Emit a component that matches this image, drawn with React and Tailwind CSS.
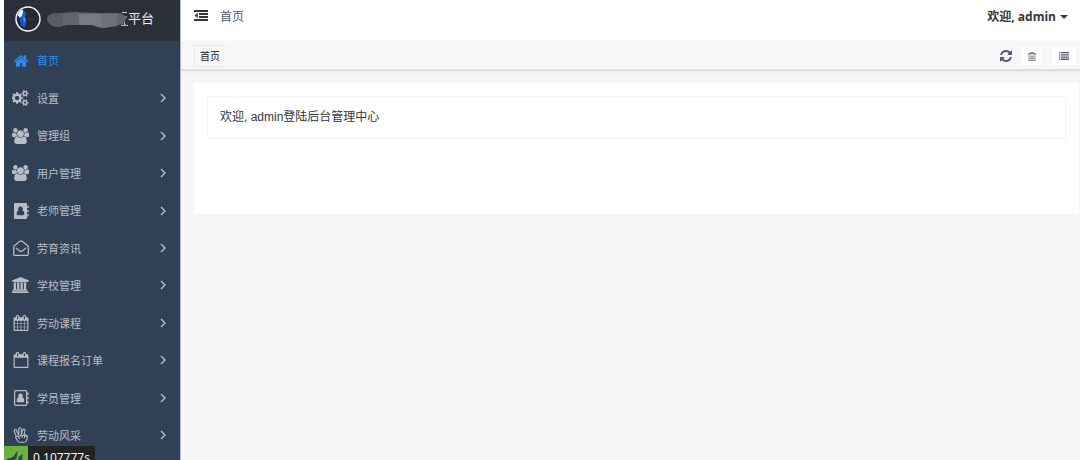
import React, { useState } from "react";

const HomeIcon = () => (
  <svg viewBox="0 0 1792 1792" className="h-4 w-4" fill="currentColor">
    <path d="M1472 992v480q0 26-19 45t-45 19h-384v-384h-256v384h-384q-26 0-45-19t-19-45v-480q0-1 .5-3t.5-3l575-474 575 474q1 2 1 6zm223-69l-62 74q-8 9-21 11h-3q-13 0-21-7l-692-577-692 577q-12 8-24 7-13-2-21-11l-62-74q-8-10-7-23.5t11-21.5l719-599q32-26 76-26t76 26l244 204v-195q0-14 9-23t23-9h192q14 0 23 9t9 23v408l219 182q10 8 11 21.5t-7 23.5z" />
  </svg>
);

const CogsIcon = () => (
  <svg viewBox="0 0 1920 1792" className="h-4 w-[17px]" fill="currentColor">
    <path d="M832 896q0-106-75-181t-181-75-181 75-75 181 75 181 181 75 181-75 75-181zm768 512q0-52-38-90t-90-38-90 38-38 90q0 53 37.5 90.5t90.5 37.5 90.5-37.5 37.5-90.5zm0-1024q0-52-38-90t-90-38-90 38-38 90q0 53 37.5 90.5t90.5 37.5 90.5-37.5 37.5-90.5zm-384 421v185q0 10-7 19.5t-16 10.5l-155 24q-11 35-32 76 34 48 90 115 7 11 7 20 0 12-7 19-23 30-82.5 89.5t-78.5 59.5q-11 0-21-7l-115-90q-37 19-77 31-11 108-23 155-7 24-30 24h-186q-11 0-20-7.5t-10-17.5l-23-153q-34-10-75-31l-118 89q-7 7-20 7-11 0-21-8-144-133-144-160 0-9 7-19 10-14 41-53t47-61q-23-44-35-82l-152-24q-10-1-17-9.5t-7-19.5v-185q0-10 7-19.5t16-10.5l155-24q11-35 32-76-34-48-90-115-7-11-7-20 0-12 7-20 22-30 82-89t79-59q11 0 21 7l115 90q34-18 77-32 11-108 23-154 7-24 30-24h186q11 0 20 7.5t10 17.5l23 153q34 10 75 31l118-89q8-7 20-7 11 0 21 8 144 133 144 160 0 8-7 19-12 16-42 54t-45 60q23 48 34 82l152 23q10 2 17 10.5t7 19.5zm640 533v140q0 16-149 31-12 27-30 52 51 113 51 138 0 4-4 7-122 71-124 71-8 0-46-47t-52-68q-20 2-30 2t-30-2q-14 21-52 68t-46 47q-2 0-124-71-4-3-4-7 0-25 51-138-18-25-30-52-149-15-149-31v-140q0-16 149-31 13-29 30-52-51-113-51-138 0-4 4-7 4-2 35-20t59-34 30-16q8 0 46 46.5t52 67.5q20-2 30-2t30 2q51-71 92-112l6-2q4 0 124 70 4 3 4 7 0 25-51 138 17 23 30 52 149 15 149 31zm0-1024v140q0 16-149 31-12 27-30 52 51 113 51 138 0 4-4 7-122 71-124 71-8 0-46-47t-52-68q-20 2-30 2t-30-2q-14 21-52 68t-46 47q-2 0-124-71-4-3-4-7 0-25 51-138-18-25-30-52-149-15-149-31v-140q0-16 149-31 13-29 30-52-51-113-51-138 0-4 4-7 4-2 35-20t59-34 30-16q8 0 46 46.5t52 67.5q20-2 30-2t30 2q51-71 92-112l6-2q4 0 124 70 4 3 4 7 0 25-51 138 17 23 30 52 149 15 149 31z" />
  </svg>
);

const UsersIcon = () => (
  <svg viewBox="64 0 1920 1792" className="h-4 w-[17px]" fill="currentColor">
    <path d="M657 896q-162 5-265 128h-134q-82 0-138-40.5t-56-118.5q0-353 124-353 6 0 43.5 21t97.5 42.5 119 21.5q67 0 133-23-5 37-5 66 0 159 93 294zm1071 637q0 120-73 189.5t-194 69.5h-874q-121 0-194-69.5t-73-189.5q0-53 3.5-103.5t14-109 26.5-108.5 43-97.5 62-81 85.5-53.5 111.5-20q10 0 43 21.5t73 48 107 48 135 21.5 135-21.5 107-48 73-48 43-21.5q61 0 111.5 20t85.5 53.5 62 81 43 97.5 26.5 108.5 14 109 3.5 103.5zm-1024-1277q0 106-75 181t-181 75-181-75-75-181 75-181 181-75 181 75 75 181zm704 384q0 159-112.5 271.5t-271.5 112.5-271.5-112.5-112.5-271.5 112.5-271.5 271.5-112.5 271.5 112.5 112.5 271.5zm576 225q0 78-56 118.5t-138 40.5h-134q-103-123-265-128 93-135 93-294 0-29-5-66 66 23 133 23 59 0 119-21.5t97.5-42.5 43.5-21q124 0 124 353zm-128-609q0 106-75 181t-181 75-181-75-75-181 75-181 181-75 181 75 75 181z" />
  </svg>
);

const BookIcon = () => (
  <svg viewBox="0 0 16 16" className="h-4 w-4" fill="currentColor">
    <path
      fillRule="evenodd"
      d="M2 0h11a1 1 0 0 1 1 1v14a1 1 0 0 1-1 1H2a1 1 0 0 1-1-1V1a1 1 0 0 1 1-1zM7.500 3.500A2.300 2.300 0 0 0 5.800 7.400C4.200 7.500 3.700 8.900 3.700 11c0 .8.400 1.200 1.100 1.200h5.400c.7 0 1.100-.4 1.100-1.200 0-2.100-.5-3.500-2.100-3.600A2.300 2.300 0 0 0 7.500 3.500z"
    />
    <path d="M14.300 2.500h1.300v2.500h-1.300zM14.300 6.700h1.300v2.500h-1.300zM14.300 10.900h1.300v2.500h-1.300z" />
  </svg>
);

const BookOutlineIcon = () => (
  <svg viewBox="0 0 16 16" className="h-4 w-4" fill="currentColor">
    <rect x="1.600" y="0.600" width="12" height="14.800" rx="1" fill="none" stroke="currentColor" strokeWidth="1.200" />
    <path d="M7.500 3.500A2.300 2.300 0 0 0 5.800 7.400C4.200 7.500 3.700 8.900 3.700 11c0 .8.400 1.200 1.100 1.200h5.400c.7 0 1.100-.4 1.100-1.200 0-2.100-.5-3.500-2.100-3.600A2.300 2.300 0 0 0 7.500 3.500z" />
    <path d="M14.300 2.500h1.300v2.500h-1.300zM14.300 6.700h1.300v2.500h-1.300zM14.300 10.900h1.300v2.500h-1.300z" />
  </svg>
);

const EnvelopeIcon = () => (
  <svg viewBox="0 0 16 16" className="h-4 w-4" fill="none" stroke="currentColor" strokeWidth="1.200" strokeLinejoin="round">
    <path d="M.7 6.200 6.800 1.300Q8 .3 9.200 1.300L15.300 6.200V14.300a1 1 0 0 1-1 1H1.700a1 1 0 0 1-1-1z" />
    <path d="M3.300 8.200 6.800 11Q8 12 9.200 11L12.700 8.200" strokeLinecap="round" />
  </svg>
);

const SchoolIcon = () => (
  <svg viewBox="64 0 1920 1792" className="h-4 w-[17px]" fill="currentColor">
    <path d="M1024 0l960 384v128h-128q0 26-20.500 45t-48.500 19h-1526q-28 0-48.500-19t-20.500-45h-128v-128zm-768 640h256v768h128v-768h256v768h128v-768h256v768h128v-768h256v768h59q28 0 48.500 19t20.500 45v64h-1664v-64q0-26 20.500-45t48.500-19h59v-768zm1595 960q28 0 48.500 19t20.500 45v128h-1920v-128q0-26 20.500-45t48.500-19h1782z" />
  </svg>
);

const CalendarIcon = () => (
  <svg viewBox="0 0 1792 1792" className="h-4 w-4" fill="currentColor">
    <path d="M192 1664h288v-288h-288v288zm352 0h320v-288h-320v288zm-352-352h288v-320h-288v320zm352 0h320v-320h-320v320zm-352-384h288v-288h-288v288zm736 736h320v-288h-320v288zm-384-736h320v-288h-320v288zm768 736h288v-288h-288v288zm-384-352h320v-320h-320v320zm-352-864v-288q0-13-9.500-22.500t-22.500-9.500h-64q-13 0-22.500 9.500t-9.500 22.500v288q0 13 9.500 22.500t22.500 9.500h64q13 0 22.500-9.500t9.500-22.500zm736 864h288v-320h-288v320zm-384-384h320v-288h-320v288zm384 0h288v-288h-288v288zm32-480v-288q0-13-9.500-22.500t-22.500-9.500h-64q-13 0-22.500 9.500t-9.500 22.500v288q0 13 9.500 22.500t22.500 9.500h64q13 0 22.500-9.500t9.500-22.500zm384-64v1280q0 52-38 90t-90 38h-1408q-52 0-90-38t-38-90v-1280q0-52 38-90t90-38h128v-96q0-66 47-113t113-47h64q66 0 113 47t47 113v96h384v-96q0-66 47-113t113-47h64q66 0 113 47t47 113v96h128q52 0 90 38t38 90z" />
  </svg>
);

const CalendarOutlineIcon = () => (
  <svg viewBox="0 0 1792 1792" className="h-4 w-4" fill="currentColor">
    <path d="M192 1664h1408v-1024h-1408v1024zm384-1216v-288q0-14-9-23t-23-9h-64q-14 0-23 9t-9 23v288q0 14 9 23t23 9h64q14 0 23-9t9-23zm768 0v-288q0-14-9-23t-23-9h-64q-14 0-23 9t-9 23v288q0 14 9 23t23 9h64q14 0 23-9t9-23zm384-64v1280q0 52-38 90t-90 38h-1408q-52 0-90-38t-38-90v-1280q0-52 38-90t90-38h128v-96q0-66 47-113t113-47h64q66 0 113 47t47 113v96h384v-96q0-66 47-113t113-47h64q66 0 113 47t47 113v96h128q52 0 90 38t38 90z" />
  </svg>
);

const PeaceIcon = () => (
  <svg viewBox="0 0 16 16" className="h-4 w-4" fill="none" stroke="currentColor" strokeWidth="1.100" strokeLinecap="round" strokeLinejoin="round">
    <path d="M3.300 9.500 1.200 4.300Q1 2.900 2.100 2.600 3.100 2.400 3.600 3.500L5.700 8.300V1.900Q5.900.7 7 .7T8.300 1.900V7.300L9.700 3Q10.300 1.900 11.300 2.200 12.300 2.700 12 3.900L10.900 7.800Q13.900 7.500 14.100 9V12Q13.500 15.300 10.500 15.300H6.700Q5.500 15.300 4.500 13.800L2.700 10.800Q2.500 9.800 3.300 9.500z" />
    <path d="M3.300 9.500Q4.600 8.900 5.400 10L6.500 11.600M6.700 9.300Q8.300 7.200 9 8.700L9.100 10.600M9.200 8.500Q11 7.300 11.600 8.900V10.600M11.600 9.200Q13 8 14 9.500" />
  </svg>
);

const ArrowIcon = () => (
  <svg viewBox="0 0 6 10" className="h-2.5 w-1.5" fill="none" stroke="currentColor" strokeWidth="1.400">
    <path d="M1 1l4 4-4 4" />
  </svg>
);

const OutdentIcon = () => (
  <svg viewBox="0 0 14 11" className="h-[11px] w-3.5" fill="currentColor">
    <path d="M0 0h14v2H0zM5 3h9v2H5zM5 6h9v2H5zM0 9h14v2H0zM3.800 2.700v5.600L.6 5.500z" />
  </svg>
);

const RefreshIcon = () => (
  <svg viewBox="128 128 1536 1536" className="h-3 w-3" fill="currentColor">
    <path d="M1639 1056q0 5-1 7-64 268-268 434.500t-478 166.500q-146 0-282.500-55t-243.500-157l-129 129q-19 19-45 19t-45-19-19-45v-448q0-26 19-45t45-19h448q26 0 45 19t19 45-19 45l-137 137q71 66 161 102t187 36q134 0 250-65t186-179q11-17 53-117 8-23 30-23h192q13 0 22.500 9.500t9.500 22.500zm25-800v448q0 26-19 45t-45 19h-448q-26 0-45-19t-19-45 19-45l138-138q-148-137-349-137-134 0-250 65t-186 179q-11 17-53 117-8 23-30 23h-199q-13 0-22.500-9.500t-9.500-22.500v-7q65-268 270-434.500t480-166.500q146 0 284 55.500t245 156.500l130-129q19-19 45-19t45 19 19 45z" />
  </svg>
);

const TrashIcon = () => (
  <svg viewBox="0 0 8 9" className="h-[9px] w-2" fill="none" stroke="currentColor">
    <path d="M0 1.800h8" />
    <path d="M2.700 1.500V.5h2.600v1M1 2.500v6h6v-6M2.800 3.500v4M4 3.500v4M5.200 3.500v4" strokeWidth="0.700" />
  </svg>
);

const ListIcon = () => (
  <svg viewBox="0 0 10 8" className="h-2 w-2.5" fill="currentColor">
    <path d="M0 0h1.300v1.300H0zM2 0h8v1.300H2zM0 2.200h1.300v1.300H0zM2 2.200h8v1.300H2zM0 4.400h1.300v1.300H0zM2 4.400h8v1.300H2zM0 6.600h1.300v1.300H0zM2 6.600h8v1.300H2z" />
  </svg>
);

const Logo = () => (
  <svg viewBox="0 0 26 26" className="h-[26px] w-[26px]">
    <circle cx="13" cy="13" r="12" fill="#252832" stroke="#f4f5f6" strokeWidth="1.500" />
    <path d="M2.500 9 5.500 4.500 8 3.500 8.300 7 7 10 5 12z" fill="#e9f1fb" />
    <path d="M8 6.500 10.500 5 10.800 9.500 8.500 13 6.800 11z" fill="#1d62c9" />
    <path d="M5 11.500 7.500 11l3.500 7-.8 3-2.700-.5L5 16z" fill="#1c55dc" />
    <path d="M8.500 10.500 10.500 12.500l.3 4.500-2.500-3z" fill="#39a2ee" />
    <path d="M13.500 12h7v2.500h-7z" fill="#303136" />
  </svg>
);

const Smudge = () => (
  <svg viewBox="0 0 81 18" className="h-[18px] w-[81px]">
    <path d="M75 2.500h5M75 7h5M77.500 7v8M74 15.300h7" stroke="#c9cbce" strokeWidth="1" fill="none" />
    <path d="M0 9Q1 4 7 3.500l21-1.500 26 1 16 0q8 0 9 6 0 5-7 6l-6 1-7 2q-9 0-14-3l-25 0-8 2Q1 16 0 9z" fill="#61646c" />
    <path d="M0 9Q1 4 7 3.500l9-.6v13.200l-4 1Q1 16 0 9z" fill="#585b64" />
    <path d="M32 4h22v13l-9-2-13 0z" fill="#777a80" />
    <path d="M54 4h16v12l-6 1-10 1z" fill="#6e7178" />
  </svg>
);

const menus = [
  { name: "首页", Icon: HomeIcon },
  { name: "设置", Icon: CogsIcon, sub: true },
  { name: "管理组", Icon: UsersIcon, sub: true },
  { name: "用户管理", Icon: UsersIcon, sub: true },
  { name: "老师管理", Icon: BookIcon, sub: true },
  { name: "劳育资讯", Icon: EnvelopeIcon, sub: true },
  { name: "学校管理", Icon: SchoolIcon, sub: true },
  { name: "劳动课程", Icon: CalendarIcon, sub: true },
  { name: "课程报名订单", Icon: CalendarOutlineIcon, sub: true },
  { name: "学员管理", Icon: BookOutlineIcon, sub: true },
  { name: "劳动风采", Icon: PeaceIcon, sub: true },
];

const Sidebar = () => {
  const [active, setActive] = useState("首页");

  return (
    <aside className="flex w-[177px] shrink-0 flex-col border-r border-[#b6bdc8] bg-[#304156]">
      <div className="flex h-[41px] shrink-0 items-center bg-[#2b2f3a] pb-1 pl-[11px] text-[13px] text-[#eceef0]">
        <Logo />
        <div className="ml-1.5 flex items-center">
          <Smudge />
          <span className="leading-5">平台</span>
        </div>
      </div>
      <nav className="mt-px grid h-[412px] shrink-0 auto-rows-fr">
        {menus.map(({ name, Icon, sub }) => (
          <a
            key={name}
            href="#"
            onClick={(e) => {
              e.preventDefault();
              setActive(name);
            }}
            className={
              active === name
                ? "flex items-center pr-3.5 pl-2 text-[11px] text-[#2d8cf0]"
                : "flex items-center pr-3.5 pl-2 text-[11px] text-[#b9bec6]"
            }
          >
            <span className="mr-2 flex w-[17px] justify-center">
              <Icon />
            </span>
            <span className="flex-1 pt-0.5">{name}</span>
            {sub && <ArrowIcon />}
          </a>
        ))}
      </nav>
    </aside>
  );
};

const Header = () => (
  <header className="flex h-[41px] shrink-0 items-center bg-white pr-3 pb-2 pl-[13px] text-[#33363d]">
    <button type="button" aria-label="收起菜单" className="mr-3 pb-0.5">
      <OutdentIcon />
    </button>
    <a href="#" className="text-xs text-[#515a6e]">首页</a>
    <button type="button" className="ml-auto flex items-center gap-1 font-['Open_Sans','Noto_Sans_CJK_SC',sans-serif] text-xs font-bold">
      欢迎, admin
      <svg viewBox="0 0 8 4" className="h-1 w-2" fill="currentColor">
        <path d="M0 0h8L4 4z" />
      </svg>
    </button>
  </header>
);

const TabBar = () => (
  <div className="flex h-[29px] shrink-0 items-center border-b border-[#dcdfe6] bg-[#f7f7f7] pt-0.5 pr-1 pl-[13px] text-[#515a6e] shadow-sm">
    <button type="button" className="h-[22px] border-y border-l border-[#e8e8eb] px-[5px] text-[10px] text-[#222]">
      首页
    </button>
    <button type="button" aria-label="刷新" className="mr-[9px] ml-auto">
      <RefreshIcon />
    </button>
    <button type="button" aria-label="删除" className="mr-2.5 flex h-[18px] w-[21px] items-center justify-center bg-white">
      <TrashIcon />
    </button>
    <button type="button" aria-label="列表" className="flex h-[18px] w-6 items-center justify-center bg-white">
      <ListIcon />
    </button>
  </div>
);

const DebugBadge = () => (
  <div className="fixed bottom-0 left-1 flex h-3.5 items-start overflow-hidden bg-[#232323] pr-[5px] font-['Open_Sans',sans-serif] text-xs leading-6 text-white">
    <svg viewBox="0 0 24 14" className="mr-[5px] h-3.5 w-6">
      <path d="M0 0h24v14H0z" fill="#6cb33e" />
      <path d="M2 14q1-1.500 4-2 4-1 5.500-4.500Q12 6 14 5q-1 2-.8 4 0 3-2.200 5zM14 14q0-4 5-6-1.500 3-.5 6z" fill="#2d4350" />
    </svg>
    0.107777s
  </div>
);

const App = () => {
  return (
    <div className="flex h-screen overflow-hidden bg-[#f6f6f6] font-['Liberation_Sans','Noto_Sans_CJK_SC',sans-serif]">
      <div className="w-1 shrink-0 bg-white" />
      <Sidebar />
      <div className="flex min-w-0 flex-1 flex-col">
        <Header />
        <TabBar />
        <main className="mt-[13px] mr-px ml-[13px] min-h-[131px] bg-white p-[13px]">
          <div className="border border-[#f5f5f5] px-3 py-2.5 text-xs leading-5 text-[#33363d] shadow-xs">
            欢迎, admin登陆后台管理中心
          </div>
        </main>
      </div>
      <DebugBadge />
    </div>
  );
};

export default App;
